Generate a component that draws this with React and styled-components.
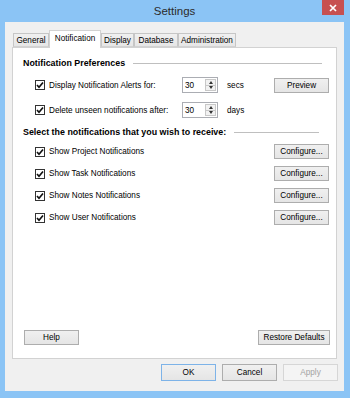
import React from 'react';
import styled, { createGlobalStyle } from 'styled-components';

const GlobalStyle = createGlobalStyle`
  html, body {
    margin: 0;
    padding: 0;
  }
  body {
    font-family: "Liberation Sans", Arial, sans-serif;
  }
`;

const Window = styled.div`
  width: 350px;
  height: 398px;
  box-sizing: border-box;
  background: #8bc4f5;
  padding: 0 6px 7px 5px;
  display: flex;
  flex-direction: column;
`;

const TitleBar = styled.div`
  height: 22px;
  flex-shrink: 0;
  display: grid;
  grid-template-columns: 1fr auto 1fr;
  align-items: start;
`;

const Title = styled.div`
  grid-column: 2;
  font-size: 11.5px;
  line-height: 23px;
  color: #2b2b2b;
`;

const CloseButton = styled.div`
  grid-column: 3;
  justify-self: end;
  width: 22px;
  height: 15px;
  background: #c75050;
  display: flex;
  align-items: center;
  justify-content: center;
`;

const Client = styled.div`
  flex: 1;
  background: #f0f0f0;
  padding: 8px 7px 10px 7px;
  display: flex;
  flex-direction: column;
  min-height: 0;
`;

const TabStrip = styled.div`
  display: flex;
  align-items: flex-end;
  height: 17px;
  padding-left: 1px;
  position: relative;
  z-index: 1;
`;

const Tab = styled.div`
  box-sizing: border-box;
  width: ${(p) => p.$w}px;
  height: ${(p) => (p.$active ? 18 : 14)}px;
  margin-bottom: ${(p) => (p.$active ? -1 : 0)}px;
  border: 1px solid ${(p) => (p.$active ? '#d2d2d2' : '#c6c6c6')};
  border-bottom: ${(p) => (p.$active ? 'none' : '1px solid #d2d2d2')};
  background: ${(p) => (p.$active ? '#ffffff' : 'linear-gradient(#f0f0f0, #e6e6e6)')};
  font-size: 8.2px;
  line-height: ${(p) => (p.$active ? 15 : 13)}px;
  text-align: center;
  color: #000;
  white-space: nowrap;
`;

const Panel = styled.div`
  flex: 1;
  background: #fff;
  border: 1px solid #d2d2d2;
  padding: 9px 7px 13px 10px;
  display: flex;
  flex-direction: column;
`;

const SectionHeader = styled.div`
  display: flex;
  align-items: center;
  gap: 8px;
  height: 12px;
  margin-top: ${(p) => p.$top || 0}px;
  font-size: 8.9px;
  font-weight: bold;
  color: #000;
  white-space: nowrap;
`;

const Rule = styled.div`
  flex: 1;
  border-top: 1px solid #bfbfbf;
  margin-right: ${(p) => p.$right}px;
`;

const PrefRow = styled.div`
  display: grid;
  grid-template-columns: 147px 36px 1fr 55px;
  align-items: center;
  height: 16px;
  padding-left: 12px;
  margin-top: ${(p) => p.$top}px;
`;

const NotifyRow = styled.div`
  display: grid;
  grid-template-columns: 1fr 55px;
  align-items: center;
  height: 15px;
  padding-left: 12px;
  margin-top: ${(p) => p.$top}px;
`;

const CheckLabel = styled.label`
  display: flex;
  align-items: center;
  gap: 4px;
  font-size: 8.2px;
  color: #000;
  white-space: nowrap;
`;

const Box = styled.span`
  box-sizing: border-box;
  width: 10px;
  height: 10px;
  border: 1px solid #333;
  background: #fff;
  display: flex;
  align-items: center;
  justify-content: center;
`;

const Spin = styled.div`
  box-sizing: border-box;
  width: 36px;
  height: 16px;
  border: 1px solid #abadb3;
  background: #fff;
  display: flex;
  padding: 1px;
`;

const SpinValue = styled.div`
  flex: 1;
  font-size: 8.2px;
  line-height: 13px;
  padding-left: 1px;
  color: #000;
`;

const SpinButtons = styled.div`
  box-sizing: border-box;
  width: 11px;
  border: 1px solid #c8c8c8;
  background: #f2f2f2;
  display: flex;
  flex-direction: column;
`;

const SpinHalf = styled.div`
  flex: 1;
  display: flex;
  align-items: center;
  justify-content: center;
  border-top: ${(p) => (p.$down ? '1px solid #c8c8c8' : 'none')};
`;

const Arrow = styled.span`
  width: 0;
  height: 0;
  border-left: 2.5px solid transparent;
  border-right: 2.5px solid transparent;
  border-${(p) => (p.$down ? 'top' : 'bottom')}: 3px solid #333;
`;

const Unit = styled.span`
  font-size: 8.2px;
  color: #000;
  padding-left: 9px;
`;

const Button = styled.button`
  box-sizing: border-box;
  width: ${(p) => p.$w || 55}px;
  height: ${(p) => p.$h || 15}px;
  padding: 0;
  margin: 0;
  border: 1px solid ${(p) => (p.$default ? '#7db3e8' : p.disabled ? '#d6d6d6' : '#adadad')};
  background: ${(p) => (p.disabled ? '#f4f4f4' : 'linear-gradient(#f0f0f0, #e5e5e5)')};
  font-family: "Liberation Sans", Arial, sans-serif;
  font-size: 8.2px;
  color: ${(p) => (p.disabled ? '#a3a3a3' : '#000')};
  justify-self: end;
`;

const PanelFooter = styled.div`
  margin-top: auto;
  display: flex;
  justify-content: space-between;
  padding-left: 1px;
  margin-right: -1px;
`;

const DialogButtons = styled.div`
  display: flex;
  justify-content: flex-end;
  gap: 6px;
  margin-top: 5px;
  margin-right: -1px;
`;

const tabs = [
  { name: 'General', w: 36 },
  { name: 'Notification', w: 52, active: true },
  { name: 'Display', w: 33 },
  { name: 'Database', w: 44 },
  { name: 'Administration', w: 58 },
];

const notifications = [
  'Show Project Notifications',
  'Show Task Notifications',
  'Show Notes Notifications',
  'Show User Notifications',
];

const Check = ({ children }) => (
  <CheckLabel>
    <Box>
      <svg width="8" height="8" viewBox="0 0 8 8">
        <path d="M1 4 L3 6.2 L7 1.5" fill="none" stroke="#111" strokeWidth="1.7" />
      </svg>
    </Box>
    {children}
  </CheckLabel>
);

const SpinBox = ({ value }) => (
  <Spin>
    <SpinValue>{value}</SpinValue>
    <SpinButtons>
      <SpinHalf>
        <Arrow />
      </SpinHalf>
      <SpinHalf $down>
        <Arrow $down />
      </SpinHalf>
    </SpinButtons>
  </Spin>
);

export default function App() {
  return (
    <>
      <GlobalStyle />
      <Window>
        <TitleBar>
          <Title>Settings</Title>
          <CloseButton>
            <svg width="8" height="8" viewBox="0 0 8 8">
              <path d="M1 1 L7 7 M7 1 L1 7" stroke="#fff" strokeWidth="1.7" />
            </svg>
          </CloseButton>
        </TitleBar>
        <Client>
          <TabStrip>
            {tabs.map((t) => (
              <Tab key={t.name} $w={t.w} $active={t.active}>
                {t.name}
              </Tab>
            ))}
          </TabStrip>
          <Panel>
            <SectionHeader>
              Notification Preferences
              <Rule $right={7} />
            </SectionHeader>
            <PrefRow $top={8}>
              <Check>Display Notification Alerts for:</Check>
              <SpinBox value="30" />
              <Unit>secs</Unit>
              <Button>Preview</Button>
            </PrefRow>
            <PrefRow $top={9}>
              <Check>Delete unseen notifications after:</Check>
              <SpinBox value="30" />
              <Unit>days</Unit>
            </PrefRow>
            <SectionHeader $top={8}>
              Select the notifications that you wish to receive:
              <Rule $right={10} />
            </SectionHeader>
            {notifications.map((n, i) => (
              <NotifyRow key={n} $top={i === 0 ? 6 : 7}>
                <Check>{n}</Check>
                <Button>Configure...</Button>
              </NotifyRow>
            ))}
            <PanelFooter>
              <Button>Help</Button>
              <Button $w={72}>Restore Defaults</Button>
            </PanelFooter>
          </Panel>
          <DialogButtons>
            <Button $h={17} $default>OK</Button>
            <Button $h={17}>Cancel</Button>
            <Button $h={17} disabled>Apply</Button>
          </DialogButtons>
        </Client>
      </Window>
    </>
  );
}
